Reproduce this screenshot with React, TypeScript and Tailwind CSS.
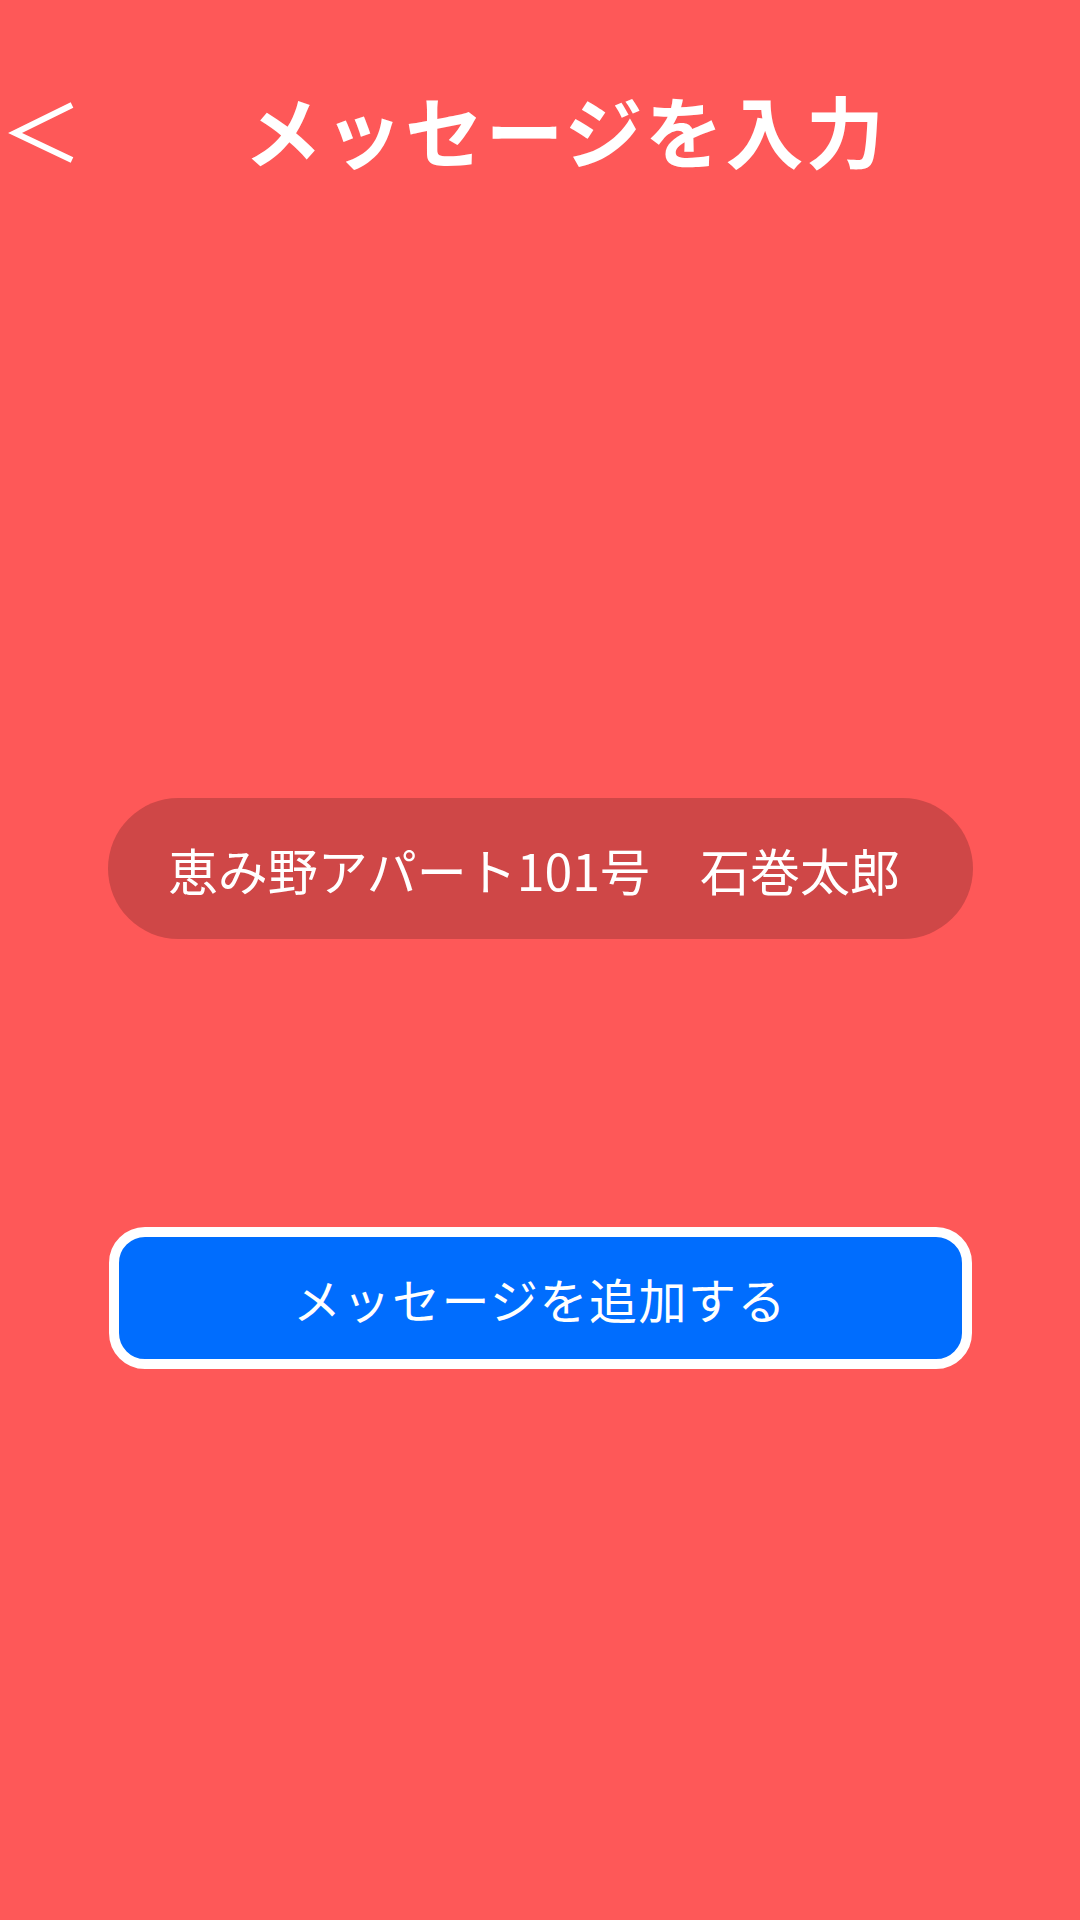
import React from 'react';

const jp = { fontFamily: '"Noto Sans CJK JP", "Noto Sans", sans-serif' };

function BackIcon() {
  return (
    <svg width="80" height="80" viewBox="0 0 80 80" className="shrink-0">
      <polyline
        points="72,16 15,44 72,71"
        fill="none"
        stroke="white"
        strokeWidth="6"
        strokeLinejoin="miter"
      />
    </svg>
  );
}

export default function App() {
  return (
    <div className="flex h-[1920px] w-[1080px] flex-col items-center bg-[#fe5858]" style={jp}>
      <header className="mt-[89px] flex h-[80px] w-full items-center">
        <BackIcon />
        <h1 className="ml-[164px] text-[78px] leading-none font-bold tracking-[2.5px] text-white">
          メッセージを入力
        </h1>
      </header>

      <div className="mt-[629px] flex h-[141px] w-[865px] items-center justify-center rounded-full bg-[#cf4747] pr-[12px]">
        <span className="text-[50px] leading-none font-normal text-white">
          恵み野アパート101号　石巻太郎
        </span>
      </div>

      <button className="mt-[288px] flex h-[142px] w-[863px] items-center justify-center rounded-[36px] border-[10px] border-white bg-[#006dfe]">
        <span className="text-[48px] leading-none font-normal tracking-[1.5px] text-white">
          メッセージを追加する
        </span>
      </button>
    </div>
  );
}
